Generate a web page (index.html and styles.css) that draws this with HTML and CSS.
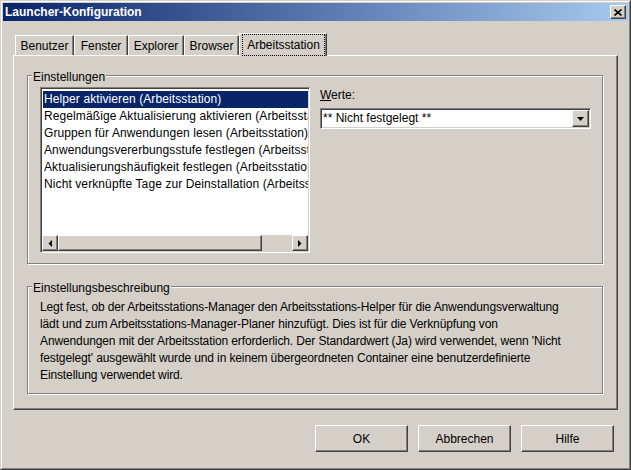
FILE: index.html
```html
<!DOCTYPE html>
<html lang="de">
<head>
    <meta charset="UTF-8">
    <title>Launcher-Konfiguration</title>
    <link rel="stylesheet" href="styles.css">
</head>
<body>
    <div class="window">
        <div class="frame">
            <div class="titlebar">
                <span class="title">Launcher-Konfiguration</span>
                <button class="close-btn" title="Schließen">
                    <svg width="8" height="7" viewBox="0 0 8 7"><path d="M0.5 0.5 L7.5 6.5 M7.5 0.5 L0.5 6.5" stroke="#000" stroke-width="1.6" fill="none"/></svg>
                </button>
            </div>

            <div class="content">
                <div class="tabs">
                    <div class="tab tab-benutzer">Benutzer</div>
                    <div class="tab tab-fenster">Fenster</div>
                    <div class="tab tab-explorer">Explorer</div>
                    <div class="tab tab-browser">Browser</div>
                    <div class="tab tab-arbeitsstation active"><span class="focus">Arbeitsstation</span></div>
                </div>

                <div class="panel">
                    <div class="group group-settings">
                        <span class="group-label">Einstellungen</span>
                        <div class="settings-row">
                            <div class="listbox">
                                <div class="list-items">
                                    <div class="list-item selected">Helper aktivieren (Arbeitsstation)</div>
                                    <div class="list-item">Regelmäßige Aktualisierung aktivieren (Arbeitsstation)</div>
                                    <div class="list-item">Gruppen für Anwendungen lesen (Arbeitsstation)</div>
                                    <div class="list-item">Anwendungsvererbungsstufe festlegen (Arbeitsstation)</div>
                                    <div class="list-item">Aktualisierungshäufigkeit festlegen (Arbeitsstation)</div>
                                    <div class="list-item">Nicht verknüpfte Tage zur Deinstallation (Arbeitsstation)</div>
                                </div>
                                <div class="hscroll">
                                    <div class="sb-btn">
                                        <svg width="4" height="7" viewBox="0 0 4 7"><polygon points="4,0 4,7 0.5,3.5" fill="#000"/></svg>
                                    </div>
                                    <div class="sb-thumb"></div>
                                    <div class="sb-track"></div>
                                    <div class="sb-btn">
                                        <svg width="4" height="7" viewBox="0 0 4 7"><polygon points="0,0 0,7 3.5,3.5" fill="#000"/></svg>
                                    </div>
                                </div>
                            </div>

                            <div class="values">
                                <div class="values-label"><u>W</u>erte:</div>
                                <div class="combo">
                                    <span class="combo-text">** Nicht festgelegt **</span>
                                    <div class="combo-btn">
                                        <svg width="7" height="4" viewBox="0 0 7 4"><polygon points="0,0 7,0 3.5,4" fill="#000"/></svg>
                                    </div>
                                </div>
                            </div>
                        </div>
                    </div>

                    <div class="group group-desc">
                        <span class="group-label">Einstellungsbeschreibung</span>
                        <p class="desc">Legt fest, ob der Arbeitsstations-Manager den Arbeitsstations-Helper für die Anwendungsverwaltung<br>lädt und zum Arbeitsstations-Manager-Planer hinzufügt. Dies ist für die Verknüpfung von<br>Anwendungen mit der Arbeitsstation erforderlich. Der Standardwert (Ja) wird verwendet, wenn 'Nicht<br>festgelegt' ausgewählt wurde und in keinem übergeordneten Container eine benutzerdefinierte<br>Einstellung verwendet wird.</p>
                    </div>
                </div>

                <div class="buttons">
                    <button class="btn">OK</button>
                    <button class="btn">Abbrechen</button>
                    <button class="btn">Hilfe</button>
                </div>
            </div>
        </div>
    </div>
</body>
</html>
```

FILE: styles.css
```css
* {
    box-sizing: border-box;
}

body {
    margin: 0;
    padding: 0;
    font-family: "Liberation Sans", Arial, sans-serif;
    font-size: 12px;
    color: #000;
    background-color: #d4d0c8;
}

.window {
    width: 631px;
    height: 470px;
    border: 1px solid;
    border-color: #d4d0c8 #404040 #404040 #d4d0c8;
    background-color: #d4d0c8;
}

.frame {
    height: 100%;
    padding: 1px;
    border: 1px solid;
    border-color: #fff #808080 #808080 #fff;
    display: flex;
    flex-direction: column;
}

.titlebar {
    height: 18px;
    padding: 0 2px 0 2px;
    display: flex;
    align-items: center;
    justify-content: space-between;
    background: linear-gradient(to right, #0a246a, #a6caf0);
}

.title {
    color: #fff;
    font-weight: bold;
    font-size: 12px;
}

.close-btn {
    width: 16px;
    height: 14px;
    padding: 0;
    border: 1px solid;
    border-color: #fff #404040 #404040 #fff;
    box-shadow: inset -1px -1px #808080;
    background-color: #d4d0c8;
    display: flex;
    align-items: center;
    justify-content: center;
}

.content {
    flex: 1;
    padding: 12px 10px 0 10px;
    display: flex;
    flex-direction: column;
}

/* tabs */
.tabs {
    height: 22px;
    padding-left: 2px;
    display: flex;
    align-items: flex-end;
    position: relative;
    z-index: 1;
}

.tab {
    height: 20px;
    border-top: 1px solid #fff;
    border-left: 1px solid #fff;
    border-right: 1px solid #404040;
    box-shadow: inset -1px 0 #808080;
    display: flex;
    align-items: center;
    justify-content: center;
    background-color: #d4d0c8;
}

.tab-benutzer { width: 59px; }
.tab-fenster { width: 54px; }
.tab-explorer { width: 56px; }
.tab-browser { width: 55px; }

.tab.active {
    width: 88px;
    height: 23px;
    margin-bottom: -1px;
    padding: 0 1px 0 2px;
    align-items: stretch;
}

.focus {
    flex: 1;
    border: 1px dotted #000;
    display: flex;
    align-items: center;
    justify-content: center;
}

.panel {
    height: 355px;
    padding: 19px 14px 0 13px;
    border: 1px solid;
    border-color: #fff #404040 #404040 #fff;
    box-shadow: inset -1px -1px #808080;
}

/* group boxes */
.group {
    position: relative;
    border: 1px solid #808080;
    box-shadow: inset 1px 1px #fff, 1px 1px #fff;
}

.group-label {
    position: absolute;
    top: -6px;
    left: 4px;
    padding: 0 1px;
    line-height: 14px;
    background-color: #d4d0c8;
}

.group-settings {
    height: 189px;
    padding: 11px 0 0 12px;
}

.group-desc {
    height: 108px;
    margin-top: 22px;
    padding: 12px 12px 0 12px;
}

.settings-row {
    display: flex;
    gap: 10px;
}

/* list box */
.listbox {
    width: 270px;
    height: 166px;
    padding: 1px;
    border: 1px solid;
    border-color: #808080 #fff #fff #808080;
    box-shadow: inset 1px 1px #404040, inset -1px -1px #d4d0c8;
    background-color: #fff;
    display: flex;
    flex-direction: column;
}

.list-items {
    flex: 1;
    padding: 2px 0 0 1px;
    overflow: hidden;
    letter-spacing: 0.1px;
}

.list-item {
    height: 17px;
    line-height: 17px;
    padding-left: 1px;
    white-space: nowrap;
    overflow: hidden;
}

.list-item.selected {
    background-color: #0a246a;
    color: #fff;
}

.hscroll {
    height: 16px;
    display: flex;
    background-color: #d4d0c8;
}

.sb-btn,
.sb-thumb,
.combo-btn {
    border: 1px solid;
    border-color: #fff #404040 #404040 #fff;
    box-shadow: inset -1px -1px #808080;
    background-color: #d4d0c8;
}

.sb-btn {
    width: 16px;
    display: flex;
    align-items: center;
    justify-content: center;
}

.sb-thumb {
    width: 204px;
}

.sb-track {
    flex: 1;
}

/* values combo */
.values-label {
    line-height: 16px;
    margin-bottom: 5px;
}

.combo {
    width: 271px;
    height: 21px;
    padding: 1px;
    border: 1px solid;
    border-color: #808080 #fff #fff #808080;
    box-shadow: inset 1px 1px #404040, inset -1px -1px #d4d0c8;
    background-color: #fff;
    display: flex;
}

.combo-text {
    flex: 1;
    padding-left: 1px;
    line-height: 17px;
    white-space: nowrap;
}

.combo-btn {
    width: 17px;
    height: 17px;
    display: flex;
    align-items: center;
    justify-content: center;
}

.desc {
    margin: 0;
    line-height: 17px;
    white-space: nowrap;
    letter-spacing: -0.12px;
}

/* dialog buttons */
.buttons {
    display: flex;
    justify-content: flex-end;
    gap: 10px;
    padding: 15px 4px 0 0;
}

.btn {
    width: 93px;
    height: 27px;
    padding: 0;
    font-family: inherit;
    font-size: 12px;
    color: #000;
    border: 1px solid;
    border-color: #fff #404040 #404040 #fff;
    box-shadow: inset -1px -1px #808080;
    background-color: #d4d0c8;
}
```
